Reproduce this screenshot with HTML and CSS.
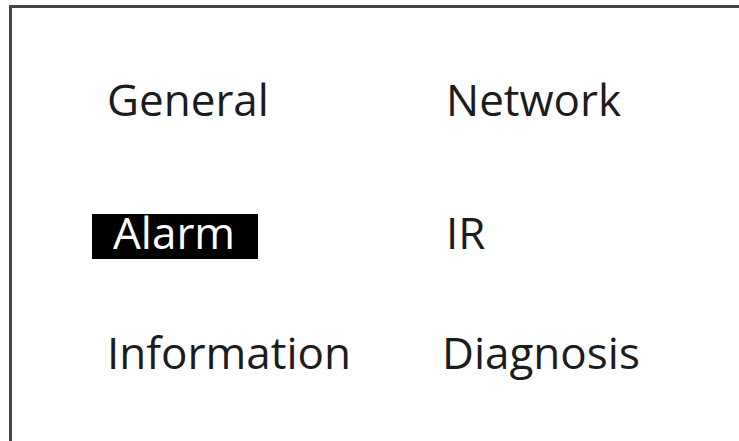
FILE: index.html
```html
<!DOCTYPE html>
<html lang="en">

<head>
    <meta charset="UTF-8">
    <meta name="viewport" content="width=device-width, initial-scale=1.0">
    <title>Menu</title>
    <link rel="stylesheet" href="styles.css">
</head>

<body>
    <div class="menuPanel">
        <div class="menuGrid">
            <span class="menuItem">General</span>
            <span class="menuItem">Network</span>
            <span class="menuItem selected">Alarm</span>
            <span class="menuItem">IR</span>
            <span class="menuItem">Information</span>
            <span class="menuItem last">Diagnosis</span>
        </div>
    </div>
</body>

</html>
```

FILE: styles.css
```css
html,
body {
    height: 100%;
}

body {
    font-family: 'Open Sans', sans-serif;
    background-color: #fff;
    margin: 0;
    padding: 0;
    overflow: hidden;
}

.menuPanel {
    margin: 5px 0 0 9px;
    height: 100%;
    border-top: 3px solid #454545;
    border-left: 3px solid #454545;
    box-sizing: border-box;
    padding: 73px 0 0 80px;
}

.menuGrid {
    display: grid;
    grid-template-columns: 339px auto;
    grid-template-rows: 133px 120px auto;
    align-items: start;
    justify-items: start;
}

.menuItem {
    font-size: 44px;
    line-height: 36px;
    padding: 0 15px 9px 15px;
    color: #1c1c1c;
}

.menuItem.selected {
    background-color: #000;
    color: #fff;
    padding: 0 23px 9px 21px;
}

.menuItem.last {
    padding-left: 11px;
}
```
